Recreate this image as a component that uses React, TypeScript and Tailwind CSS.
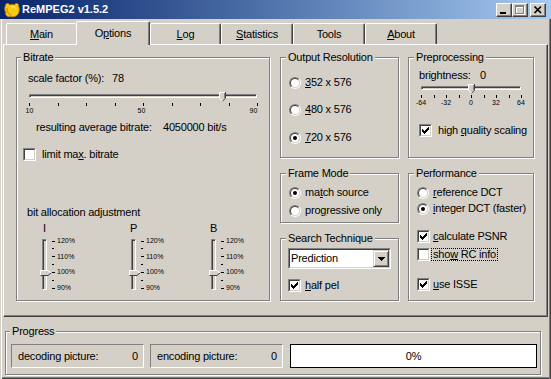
import React from "react";

function U({ children }: { children: React.ReactNode }) {
  return <span className="underline">{children}</span>;
}

function Icon() {
  return (
    <svg width="16" height="16" viewBox="0 0 16 16">
      <path
        d="M1.5 3.5 C1.5 1 5 0.8 5.5 3 C7 2.2 9.5 2.2 10.5 3 C11 0.8 15 1 14.5 4 C15.5 6 15.5 9 14.5 11 C13.5 14 10 15.5 7 14.5 C4 15.5 1 13.5 1.8 10.5 C0.5 8.5 0.5 5.5 1.5 3.5 Z"
        fill="#f7cb12"
        stroke="#c88400"
        strokeWidth="0.8"
      />
      <path d="M3 6 C3 9.5 4.5 12.5 7.5 13.5" stroke="#e39a00" fill="none" strokeWidth="1.6" />
      <path d="M7 5 C9 4.5 11 5 12 6.5" stroke="#fff3a0" fill="none" strokeWidth="1" />
    </svg>
  );
}

function TBtn({ children, className = "" }: { children: React.ReactNode; className?: string }) {
  return (
    <div
      className={`w-[16px] h-[14px] bg-[#d4d0c8] border border-t-white border-l-white border-r-[#404040] border-b-[#404040] shadow-[inset_-1px_-1px_0_#808080] ${className}`}
    >
      {children}
    </div>
  );
}

function TitleBar() {
  return (
    <div className="h-[19px] shrink-0 flex items-start bg-linear-to-r from-[#0a246a] to-[#a6caf0]">
      <div className="mt-[2px] ml-[4px]">
        <Icon />
      </div>
      <span className="ml-[2px] mt-[3px] text-white font-bold tracking-normal whitespace-nowrap">ReMPEG2 v1.5.2</span>
      <div className="ml-auto mt-[3px] mr-[5px] flex">
        <TBtn>
          <svg width="14" height="12" viewBox="0 0 14 12" shapeRendering="crispEdges">
            <rect x="3" y="8" width="6" height="2" fill="#000" />
          </svg>
        </TBtn>
        <TBtn>
          <svg width="14" height="12" viewBox="0 0 14 12" shapeRendering="crispEdges">
            <g fill="none" stroke="#fff">
              <rect x="3.5" y="2.5" width="8" height="8" />
              <line x1="3" y1="3.5" x2="12" y2="3.5" />
            </g>
            <g fill="none" stroke="#808080">
              <rect x="2.5" y="1.5" width="8" height="8" />
              <line x1="2" y1="2.5" x2="11" y2="2.5" />
            </g>
          </svg>
        </TBtn>
        <TBtn className="ml-[2px]">
          <svg width="14" height="12" viewBox="0 0 14 12">
            <path d="M3.5 2.5 L10 9 M10 2.5 L3.5 9" stroke="#000" strokeWidth="1.7" />
          </svg>
        </TBtn>
      </div>
    </div>
  );
}

const tabs: { label: React.ReactNode; cls: string; sel?: boolean }[] = [
  { label: <><U>M</U>ain</>, cls: "w-[70px] border-r-0 shadow-none" },
  { label: <>O<U>p</U>tions</>, cls: "w-[74px]", sel: true },
  { label: <><U>L</U>og</>, cls: "w-[71px]" },
  { label: <><U>S</U>tatistics</>, cls: "w-[72px]" },
  { label: <>Tools</>, cls: "w-[72px]" },
  { label: <><U>A</U>bout</>, cls: "w-[72px]" },
];

function Tabs() {
  return (
    <div className="h-[25px] shrink-0 flex items-end pl-[3px]">
      {tabs.map((t, i) => (
        <div
          key={i}
          className={`${t.cls} ${
            t.sel ? "h-[24px] -mb-px relative z-10 pt-[5px]" : "h-[21px] pt-[4px]"
          } bg-[#d4d0c8] border-t border-l border-r border-t-white border-l-white border-r-[#404040] shadow-[inset_-1px_0_0_#808080] rounded-t-[2px] flex justify-center whitespace-nowrap`}
        >
          <span>{t.label}</span>
        </div>
      ))}
    </div>
  );
}

function Group({
  title,
  className = "",
  lm = "ml-[5px]",
  children,
}: {
  title: React.ReactNode;
  className?: string;
  lm?: string;
  children?: React.ReactNode;
}) {
  return (
    <fieldset className={`border border-[#808080] shadow-[1px_1px_0_#fff,inset_1px_1px_0_#fff] ${className}`}>
      <legend className={`${lm} px-[2px] bg-[#d4d0c8] leading-[13px] whitespace-nowrap`}>{title}</legend>
      {children}
    </fieldset>
  );
}

function Radio({ checked }: { checked?: boolean }) {
  return (
    <div className="w-[12px] h-[12px] shrink-0 rounded-full border border-t-[#808080] border-l-[#808080] border-b-white border-r-white">
      <div className="w-full h-full rounded-full border border-t-[#404040] border-l-[#404040] border-b-[#d4d0c8] border-r-[#d4d0c8] bg-white flex items-center justify-center">
        {checked && <div className="w-[4px] h-[4px] rounded-full bg-black" />}
      </div>
    </div>
  );
}

function CheckMark() {
  const ys = [2, 3, 4, 3, 2, 1, 0];
  return (
    <svg width="7" height="7" viewBox="0 0 7 7" shapeRendering="crispEdges">
      {ys.map((y, x) => (
        <rect key={x} x={x} y={y} width="1" height="3" fill="#000" />
      ))}
    </svg>
  );
}

function Check({ checked }: { checked?: boolean }) {
  return (
    <div className="w-[13px] h-[13px] shrink-0 border border-t-[#808080] border-l-[#808080] border-b-white border-r-white">
      <div className="w-full h-full border border-t-[#404040] border-l-[#404040] border-b-[#d4d0c8] border-r-[#d4d0c8] bg-white flex items-center justify-center">
        {checked && <CheckMark />}
      </div>
    </div>
  );
}

function RadioRow({ checked, label, className = "" }: { checked?: boolean; label: React.ReactNode; className?: string }) {
  return (
    <div className={`flex items-center h-[13px] gap-[4px] whitespace-nowrap ${className}`}>
      <Radio checked={checked} />
      <span>{label}</span>
    </div>
  );
}

function CheckRow({
  checked,
  label,
  className = "",
  gap = "gap-[6px]",
  focus,
  framed,
}: {
  checked?: boolean;
  label: React.ReactNode;
  className?: string;
  gap?: string;
  focus?: boolean;
  framed?: boolean;
}) {
  return (
    <div className={`flex items-center h-[13px] ${gap} whitespace-nowrap ${className}`}>
      <Check checked={checked} />
      {framed ? (
        <span
          className={`leading-[11px] border px-[1px] ${focus ? "border-dotted border-black" : "border-transparent"}`}
        >
          {label}
        </span>
      ) : (
        <span>{label}</span>
      )}
    </div>
  );
}

function ThumbDown() {
  return (
    <svg width="7" height="10" viewBox="0 0 7 10" className="block">
      <polygon points="0,0 7,0 7,6 3.5,9.5 0,6" fill="#d4d0c8" />
      <path d="M0.5 6.5 V0.5 H6" stroke="#fff" fill="none" />
      <path d="M6.5 0 V6.2 L3.5 9.3" stroke="#404040" fill="none" />
      <path d="M0.5 6.2 L3.4 9.2" stroke="#fff" fill="none" />
      <path d="M5.5 1 V6" stroke="#808080" fill="none" />
    </svg>
  );
}

function ThumbRight() {
  return (
    <svg width="12" height="6" viewBox="0 0 12 6" className="block">
      <polygon points="0,0 8,0 11.5,3 8,6 0,6" fill="#d4d0c8" />
      <path d="M0.5 5.5 V0.5 H8 L11 3" stroke="#fff" fill="none" />
      <path d="M0.5 5.5 H8 L11.3 2.8" stroke="#404040" fill="none" />
    </svg>
  );
}

const trackCls =
  "border border-t-[#808080] border-l-[#808080] border-b-white border-r-white shadow-[inset_1px_1px_0_#404040]";

function Ticks({ n, cls }: { n: number; cls: string }) {
  return (
    <div className={`h-[3px] flex justify-between ${cls}`}>
      {Array.from({ length: n }).map((_, i) => (
        <div key={i} className="w-px h-full bg-black" />
      ))}
    </div>
  );
}

function VSlider({ label, w }: { label: string; w: string }) {
  const rows: { major: boolean; text?: string }[] = [
    { major: true, text: "120%" },
    { major: false },
    { major: true, text: "110%" },
    { major: false },
    { major: true, text: "100%" },
    { major: false },
    { major: true, text: "90%" },
  ];
  return (
    <div className={`flex flex-col ${w}`}>
      <div className="w-[9px] text-center">{label}</div>
      <div className="mt-[2px] flex">
        <div className="w-[12px] h-[55px] relative">
          <div className={`ml-[2px] mt-[2px] w-[5px] h-[51px] ${trackCls}`} />
          <div className="absolute left-0 top-[33px]">
            <ThumbRight />
          </div>
        </div>
        <div className="h-[55px] flex flex-col justify-between">
          {rows.map((r, i) => (
            <div key={i} className="h-[8px] flex items-center">
              <div className={`${r.major ? "w-[3px]" : "w-[2px]"} h-px bg-black`} />
              {r.text && <span className="ml-[2px] text-[7px] leading-[8px] tracking-normal">{r.text}</span>}
            </div>
          ))}
        </div>
      </div>
    </div>
  );
}

function Bitrate() {
  return (
    <Group title="Bitrate" lm="ml-[4px]" className="w-[254px] h-[250px] shrink-0">
      <div className="flex flex-col whitespace-nowrap">
        <div className="mt-[8px] pl-[11px] flex">
          <span className="w-[84px]">scale factor (%):</span>
          <span>78</span>
        </div>
        <div className={`mt-[9px] ml-[12px] w-[228px] h-[4px] relative ${trackCls}`}>
          <div className="absolute left-[189px] top-[-3px]">
            <ThumbDown />
          </div>
        </div>
        <Ticks n={9} cls="mt-[5px] ml-[12px] w-[229px]" />
        <div className="mt-[1px] ml-[7px] w-[235px] flex justify-between text-[7px] leading-[8px] tracking-normal">
          {["10", "50", "90"].map((l) => (
            <span key={l} className="w-[11px] text-center">
              {l}
            </span>
          ))}
        </div>
        <div className="mt-[6px] pl-[19px] flex">
          <span className="w-[127px]">resulting average bitrate:</span>
          <span>4050000 bit/s</span>
        </div>
        <CheckRow className="mt-[14px] pl-[6px]" label={<>limit ma<U>x</U>. bitrate</>} />
        <div className="mt-[45px] pl-[10px]">bit allocation adjustment</div>
        <div className="mt-[3px] pl-[23px] flex">
          <VSlider label="I" w="w-[89px]" />
          <VSlider label="P" w="w-[80px]" />
          <VSlider label="B" w="w-[60px]" />
        </div>
      </div>
    </Group>
  );
}

function Combo() {
  return (
    <div className="mt-[3px] ml-[7px] w-[103px] h-[21px] bg-white border border-t-[#808080] border-l-[#808080] border-b-white border-r-white">
      <div className="w-full h-full border border-t-[#404040] border-l-[#404040] border-b-[#d4d0c8] border-r-[#d4d0c8] flex items-center">
        <span className="flex-1 pl-[1px]">Prediction</span>
        <div className="w-[16px] h-[17px] bg-[#d4d0c8] border border-t-[#d4d0c8] border-l-[#d4d0c8] border-b-[#404040] border-r-[#404040] shadow-[inset_1px_1px_0_#fff,inset_-1px_-1px_0_#808080] flex items-center justify-center">
          <svg width="7" height="4" viewBox="0 0 7 4" shapeRendering="crispEdges">
            <polygon points="0,0 7,0 3.5,4" fill="#000" />
          </svg>
        </div>
      </div>
    </div>
  );
}

function Column2() {
  return (
    <div className="ml-[10px] w-[119px] flex flex-col shrink-0">
      <Group title="Output Resolution" className="h-[107px]">
        <div className="flex flex-col pl-[8px]">
          <RadioRow className="mt-[12px]" label={<><U>3</U>52 x 576</>} />
          <RadioRow className="mt-[14px]" label={<><U>4</U>80 x 576</>} />
          <RadioRow className="mt-[15px]" checked label={<><U>7</U>20 x 576</>} />
        </div>
      </Group>
      <Group title="Frame Mode" className="mt-[9px] h-[56px]">
        <div className="flex flex-col pl-[8px]">
          <RadioRow className="mt-[6px]" checked label={<>ma<U>t</U>ch source</>} />
          <RadioRow className="mt-[5px]" label={<>pro<U>g</U>ressive only</>} />
        </div>
      </Group>
      <Group title="Search Technique" className="mt-[9px] h-[69px]">
        <div className="flex flex-col">
          <Combo />
          <CheckRow className="mt-[10px] ml-[7px]" gap="gap-[4px]" checked label={<><U>h</U>alf pel</>} />
        </div>
      </Group>
    </div>
  );
}

function Column3() {
  return (
    <div className="ml-[9px] w-[126px] flex flex-col shrink-0">
      <Group title="Preprocessing" className="h-[107px]">
        <div className="flex flex-col whitespace-nowrap">
          <div className="mt-[5px] pl-[10px] flex">
            <span className="w-[61px]">brightness:</span>
            <span>0</span>
          </div>
          <div className={`mt-[4px] ml-[12px] w-[100px] h-[4px] relative ${trackCls}`}>
            <div className="absolute left-[46px] top-[-3px]">
              <ThumbDown />
            </div>
          </div>
          <Ticks n={9} cls="mt-[5px] ml-[12px] w-[101px]" />
          <div className="mt-[1px] ml-[2px] w-[120px] flex justify-between text-[7px] leading-[8px] tracking-normal">
            {["-64", "-32", "0", "32", "64"].map((l) => (
              <span key={l} className="w-[20px] text-center">
                {l}
              </span>
            ))}
          </div>
          <CheckRow className="mt-[17px] ml-[10px]" checked label={<>high <U>q</U>uality scaling</>} />
        </div>
      </Group>
      <Group title="Performance" className="mt-[9px] h-[134px]">
        <div className="flex flex-col">
          <RadioRow className="mt-[6px] ml-[8px]" label={<><U>r</U>eference DCT</>} />
          <RadioRow className="mt-[3px] ml-[8px]" checked label={<><U>i</U>nteger DCT (faster)</>} />
          <CheckRow className="mt-[15px] ml-[8px]" gap="gap-[1px]" framed checked label={<><U>c</U>alculate PSNR</>} />
          <CheckRow className="mt-[5px] ml-[8px]" gap="gap-[1px]" framed focus label={<>sho<U>w</U> RC info</>} />
          <CheckRow className="mt-[17px] ml-[8px]" gap="gap-[1px]" framed checked label={<><U>u</U>se ISSE</>} />
        </div>
      </Group>
    </div>
  );
}

function Panel() {
  return (
    <div className="h-[273px] shrink-0 border border-t-white border-l-white border-r-[#404040] border-b-[#404040] shadow-[inset_-1px_-1px_0_#808080] flex items-start pt-[6px] pl-[12px]">
      <Bitrate />
      <Column2 />
      <Column3 />
    </div>
  );
}

function Status({ label }: { label: string }) {
  return (
    <div className="w-[133px] h-[24px] flex items-center justify-between pl-[6px] pr-[5px] border border-t-[#808080] border-l-[#808080] border-b-white border-r-white whitespace-nowrap">
      <span>{label}</span>
      <span>0</span>
    </div>
  );
}

function Progress() {
  return (
    <Group title="Progress" lm="ml-[4px]" className="mt-[8px] ml-[2px] w-[536px] h-[50px]">
      <div className="mt-[6px] pl-[5px] flex">
        <Status label="decoding picture:" />
        <div className="ml-[6px]">
          <Status label="encoding picture:" />
        </div>
        <div className="ml-[7px] w-[247px] h-[24px] bg-white border border-black flex items-center justify-center">
          0%
        </div>
      </div>
    </Group>
  );
}

export default function App() {
  return (
    <div className="w-[551px] h-[379px] bg-[#d4d0c8] flex flex-col overflow-hidden font-['Liberation_Sans',Arial,sans-serif] text-[11px] leading-[13px] tracking-[-0.2px] text-black select-none">
      <TitleBar />
      <div className="flex-1 flex flex-col px-[3px] shadow-[inset_1px_0_0_#d4d0c8,inset_2px_0_0_#fff,inset_-1px_0_0_#404040,inset_-2px_0_0_#808080,inset_0_-1px_0_#404040,inset_0_-2px_0_#808080]">
        <Tabs />
        <Panel />
        <Progress />
      </div>
    </div>
  );
}
